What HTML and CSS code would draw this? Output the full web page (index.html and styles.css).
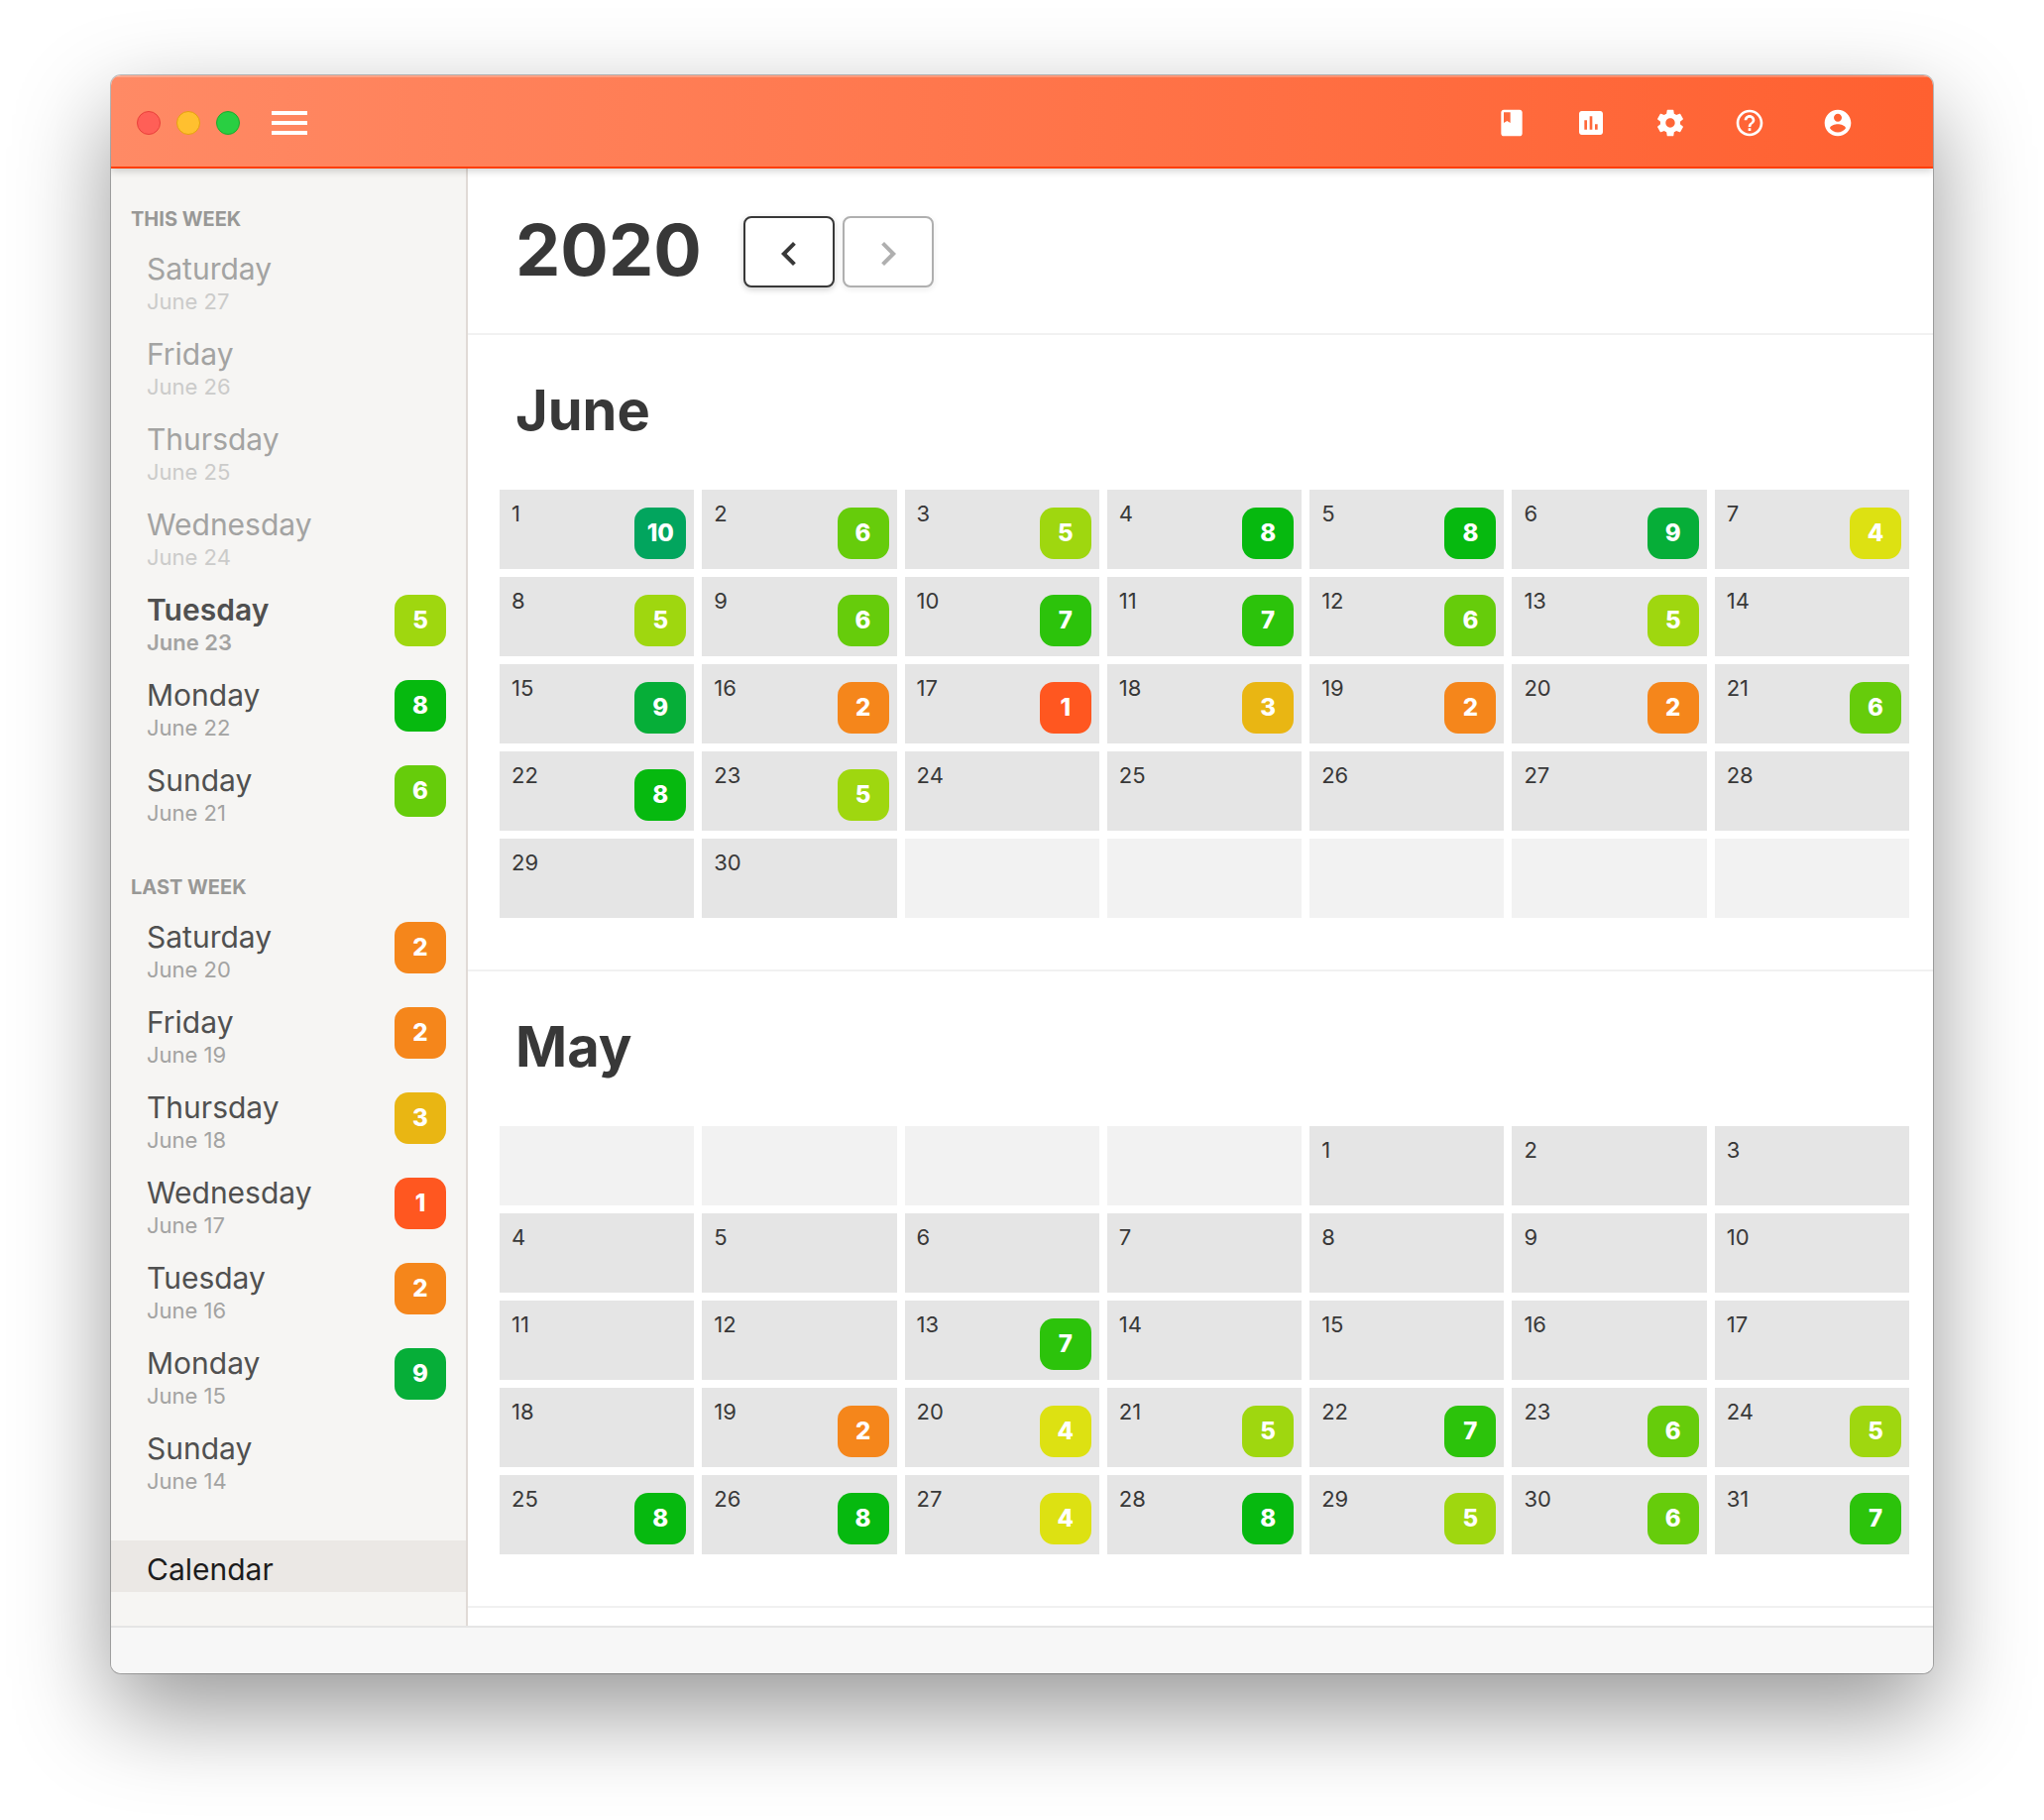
FILE: index.html
```html
<!DOCTYPE html>
<html lang="en">
<head>
<meta charset="utf-8">
<meta name="viewport" content="width=device-width, initial-scale=1">
<title>Calendar 2020</title>
<link rel="stylesheet" href="styles.css">
</head>
<body>
<div class="window">
  <header class="titlebar">
    <div class="lights" aria-hidden="true">
      <span class="light light-close"></span>
      <span class="light light-minimize"></span>
      <span class="light light-zoom"></span>
    </div>
    <button class="menu" type="button" aria-label="Toggle sidebar"><span></span><span></span><span></span></button>
    <nav class="tools" aria-label="Tools">
      <a href="#journal" aria-label="Journal"><svg viewBox="0 0 24 24"><path d="M18 2H6c-1.100 0-2 .9-2 2v16c0 1.100.9 2 2 2h12c1.100 0 2-.9 2-2V4c0-1.100-.9-2-2-2zM6 4h5v8l-2.500-1.500L6 12V4z"/></svg></a>
      <a href="#stats" aria-label="Statistics"><svg viewBox="0 0 24 24"><path d="M19 3H5c-1.100 0-2 .9-2 2v14c0 1.100.9 2 2 2h14c1.100 0 2-.9 2-2V5c0-1.100-.9-2-2-2zM9 17H7v-7h2v7zm4 0h-2V7h2v10zm4 0h-2v-4h2v4z"/></svg></a>
      <a href="#settings" aria-label="Settings"><svg viewBox="0 0 24 24"><path d="M19.430 12.980c.04-.32.07-.64.07-.98s-.03-.66-.07-.98l2.110-1.650c.19-.15.24-.42.12-.64l-2-3.460c-.12-.22-.39-.3-.61-.22l-2.490 1c-.52-.4-1.080-.73-1.690-.98l-.38-2.650C14.460 2.180 14.250 2 14 2h-4c-.25 0-.46.18-.49.42l-.38 2.650c-.61.25-1.170.59-1.690.98l-2.490-1c-.23-.09-.49 0-.61.22l-2 3.460c-.13.22-.07.49.12.64l2.110 1.650c-.04.32-.07.65-.07.98s.03.66.07.98l-2.110 1.650c-.19.15-.24.42-.12.64l2 3.460c.12.22.39.3.61.22l2.490-1c.52.4 1.080.73 1.690.98l.38 2.650c.03.24.24.42.49.42h4c.25 0 .46-.18.49-.42l.38-2.650c.61-.25 1.170-.59 1.690-.98l2.490 1c.23.09.49 0 .61-.22l2-3.460c.12-.22.07-.49-.12-.64l-2.110-1.650zM12 15.500c-1.930 0-3.500-1.570-3.500-3.500s1.570-3.500 3.500-3.500 3.500 1.570 3.500 3.500-1.570 3.500-3.500 3.500z"/></svg></a>
      <a href="#help" aria-label="Help"><svg viewBox="0 0 24 24"><path d="M11 18h2v-2h-2v2zm1-16C6.480 2 2 6.480 2 12s4.480 10 10 10 10-4.480 10-10S17.520 2 12 2zm0 18c-4.410 0-8-3.590-8-8s3.590-8 8-8 8 3.590 8 8-3.590 8-8 8zm0-14c-2.210 0-4 1.790-4 4h2c0-1.100.9-2 2-2s2 .9 2 2c0 2-3 1.750-3 5h2c0-2.250 3-2.500 3-5 0-2.210-1.790-4-4-4z"/></svg></a>
      <a class="account" href="#account" aria-label="Account"><svg viewBox="0 0 24 24"><path d="M12 2C6.480 2 2 6.480 2 12s4.480 10 10 10 10-4.480 10-10S17.520 2 12 2zm0 3c1.660 0 3 1.340 3 3s-1.340 3-3 3-3-1.340-3-3 1.340-3 3-3zm0 14.200c-2.500 0-4.710-1.280-6-3.220.03-1.990 4-3.080 6-3.080 1.990 0 5.970 1.090 6 3.080-1.290 1.940-3.500 3.220-6 3.220z"/></svg></a>
    </nav>
  </header>

  <div class="body">
    <nav class="sidebar" aria-label="Days">
      <section class="week">
        <h2>THIS WEEK</h2>
        <a class="day future" href="#d0627"><span class="label">Saturday<small>June 27</small></span></a>
        <a class="day future" href="#d0626"><span class="label">Friday<small>June 26</small></span></a>
        <a class="day future" href="#d0625"><span class="label">Thursday<small>June 25</small></span></a>
        <a class="day future" href="#d0624"><span class="label">Wednesday<small>June 24</small></span></a>
        <a class="day today" href="#d0623"><span class="label">Tuesday<small>June 23</small></span><b class="score s5">5</b></a>
        <a class="day" href="#d0622"><span class="label">Monday<small>June 22</small></span><b class="score s8">8</b></a>
        <a class="day" href="#d0621"><span class="label">Sunday<small>June 21</small></span><b class="score s6">6</b></a>
      </section>
      <section class="week">
        <h2>LAST WEEK</h2>
        <a class="day" href="#d0620"><span class="label">Saturday<small>June 20</small></span><b class="score s2">2</b></a>
        <a class="day" href="#d0619"><span class="label">Friday<small>June 19</small></span><b class="score s2">2</b></a>
        <a class="day" href="#d0618"><span class="label">Thursday<small>June 18</small></span><b class="score s3">3</b></a>
        <a class="day" href="#d0617"><span class="label">Wednesday<small>June 17</small></span><b class="score s1">1</b></a>
        <a class="day" href="#d0616"><span class="label">Tuesday<small>June 16</small></span><b class="score s2">2</b></a>
        <a class="day" href="#d0615"><span class="label">Monday<small>June 15</small></span><b class="score s9">9</b></a>
        <a class="day" href="#d0614"><span class="label">Sunday<small>June 14</small></span></a>
      </section>
      <a class="page-link" href="#calendar" aria-current="page">Calendar</a>
    </nav>

    <main class="content" id="calendar">
      <div class="year">
        <h1>2020</h1>
        <div class="pager">
          <button type="button" aria-label="Previous year"><svg viewBox="0 0 24 24"><path d="M15.410 7.410L14 6l-6 6 6 6 1.410-1.410L10.830 12z"/></svg></button>
          <button type="button" aria-label="Next year" disabled><svg viewBox="0 0 24 24"><path d="M10 6L8.590 7.410 13.170 12l-4.580 4.590L10 18l6-6z"/></svg></button>
        </div>
      </div>

      <section class="month">
        <h2>June</h2>
        <ol class="grid">
          <li>1<b class="score s10">10</b></li>
          <li>2<b class="score s6">6</b></li>
          <li>3<b class="score s5">5</b></li>
          <li>4<b class="score s8">8</b></li>
          <li>5<b class="score s8">8</b></li>
          <li>6<b class="score s9">9</b></li>
          <li>7<b class="score s4">4</b></li>
          <li>8<b class="score s5">5</b></li>
          <li>9<b class="score s6">6</b></li>
          <li>10<b class="score s7">7</b></li>
          <li>11<b class="score s7">7</b></li>
          <li>12<b class="score s6">6</b></li>
          <li>13<b class="score s5">5</b></li>
          <li>14</li>
          <li>15<b class="score s9">9</b></li>
          <li>16<b class="score s2">2</b></li>
          <li>17<b class="score s1">1</b></li>
          <li>18<b class="score s3">3</b></li>
          <li>19<b class="score s2">2</b></li>
          <li>20<b class="score s2">2</b></li>
          <li>21<b class="score s6">6</b></li>
          <li>22<b class="score s8">8</b></li>
          <li>23<b class="score s5">5</b></li>
          <li>24</li>
          <li>25</li>
          <li>26</li>
          <li>27</li>
          <li>28</li>
          <li>29</li>
          <li>30</li>
          <li class="blank"></li>
          <li class="blank"></li>
          <li class="blank"></li>
          <li class="blank"></li>
          <li class="blank"></li>
        </ol>
      </section>

      <section class="month">
        <h2>May</h2>
        <ol class="grid">
          <li class="blank"></li>
          <li class="blank"></li>
          <li class="blank"></li>
          <li class="blank"></li>
          <li>1</li>
          <li>2</li>
          <li>3</li>
          <li>4</li>
          <li>5</li>
          <li>6</li>
          <li>7</li>
          <li>8</li>
          <li>9</li>
          <li>10</li>
          <li>11</li>
          <li>12</li>
          <li>13<b class="score s7">7</b></li>
          <li>14</li>
          <li>15</li>
          <li>16</li>
          <li>17</li>
          <li>18</li>
          <li>19<b class="score s2">2</b></li>
          <li>20<b class="score s4">4</b></li>
          <li>21<b class="score s5">5</b></li>
          <li>22<b class="score s7">7</b></li>
          <li>23<b class="score s6">6</b></li>
          <li>24<b class="score s5">5</b></li>
          <li>25<b class="score s8">8</b></li>
          <li>26<b class="score s8">8</b></li>
          <li>27<b class="score s4">4</b></li>
          <li>28<b class="score s8">8</b></li>
          <li>29<b class="score s5">5</b></li>
          <li>30<b class="score s6">6</b></li>
          <li>31<b class="score s7">7</b></li>
        </ol>
      </section>
    </main>
  </div>

  <footer class="statusbar"></footer>
</div>
</body>
</html>
```
FILE: styles.css
```css
* {
  box-sizing: border-box;
}

body {
  margin: 0;
  padding: 76px 112px 148px;
  background: #fff;
  color: #383838;
  font-family: Inter, "Liberation Sans", sans-serif;
  font-size: 22px;
  line-height: 28px;
}

h1,
h2,
ol {
  margin: 0;
  padding: 0;
}

a {
  color: inherit;
  text-decoration: none;
}

svg {
  display: block;
  fill: currentColor;
}

.window {
  display: flex;
  flex-direction: column;
  overflow: hidden;
  border-radius: 10px;
  background: #fff;
  box-shadow: 0 0 0 1px rgba(0, 0, 0, 0.24), 0 38px 96px rgba(0, 0, 0, 0.41);
}

/* Title bar */
.titlebar {
  position: relative;
  z-index: 1;
  display: flex;
  align-items: center;
  height: 94px;
  padding: 4px 80px 0 26px;
  border-bottom: 2px solid #ff3d00;
  background: linear-gradient(90deg, #ff8a65, #ff6030);
  box-shadow: inset 0 2px 0 rgba(255, 255, 255, 0.25), 0 2px 8px rgba(0, 0, 0, 0.2);
  color: #fff;
}

.lights {
  display: flex;
  gap: 16px;
}

.light {
  width: 24px;
  height: 24px;
  border: 1px solid #e9403a;
  border-radius: 50%;
  background: #ff5f57;
}

.light-minimize {
  border-color: #e5a010;
  background: #ffc02f;
}

.light-zoom {
  border-color: #1cab2c;
  background: #29cf42;
}

.menu {
  display: flex;
  flex-direction: column;
  gap: 6px;
  width: 36px;
  margin-left: 32px;
  padding: 0;
  border: 0;
  background: none;
}

.menu span {
  height: 4px;
  background: #fff;
}

.tools {
  display: flex;
  gap: 48px;
  margin-left: auto;
}

.tools svg {
  width: 32px;
  height: 32px;
}

.account {
  margin-left: 9px;
}

/* Layout */
.body {
  display: flex;
}

.content {
  flex: 1;
  min-width: 0;
}

/* Sidebar */
.sidebar {
  flex: 0 0 360px;
  padding: 39px 0 34px;
  border-right: 2px solid #e0dad6;
  background: #f6f5f3;
  color: #505050;
}

.week + .week {
  margin-top: 38px;
}

.week h2 {
  margin-bottom: 10px;
  padding-left: 20px;
  color: #989896;
  font-size: 20px;
  font-weight: 700;
  line-height: 24px;
}

.day {
  display: flex;
  align-items: flex-start;
  justify-content: space-between;
  padding: 10px 20px 10px 36px;
}

.label {
  font-size: 30px;
  line-height: 36px;
}

.label small {
  display: block;
  color: #a3a3a2;
  font-size: 22px;
  line-height: 30px;
}

.future {
  color: #a3a3a2;
}

.future small {
  color: #cbcbca;
}

.today {
  font-weight: 600;
}

.page-link {
  display: block;
  margin-top: 35px;
  padding: 11px 36px 5px;
  background: #ebe8e5;
  color: #1c1c1c;
  font-size: 30px;
  line-height: 36px;
}

/* Scores */
.score {
  display: block;
  flex: none;
  width: 52px;
  height: 52px;
  border-radius: 14px;
  color: #fff;
  font-size: 24px;
  font-weight: 800;
  line-height: 52px;
  text-align: center;
}

.day .score {
  margin-top: 3px;
}

.s10 { background: #02a55e; }
.s9 { background: #06ae38; }
.s8 { background: #06b90f; }
.s7 { background: #2cc30b; }
.s6 { background: #66cc0b; }
.s5 { background: #9fd70f; }
.s4 { background: #dde112; }
.s3 { background: #e9b613; }
.s2 { background: #f5861b; }
.s1 { background: #ff5720; }

/* Year header */
.year {
  display: flex;
  align-items: flex-start;
  gap: 42px;
  padding: 48px 48px 46px;
  border-bottom: 2px solid #f1f1f1;
}

.year h1 {
  font-size: 72px;
  font-weight: 700;
  line-height: 68px;
}

.pager {
  display: flex;
  gap: 8px;
}

.pager button {
  display: flex;
  align-items: center;
  justify-content: center;
  width: 92px;
  height: 72px;
  padding: 4px 0 0;
  border: 2px solid #383838;
  border-radius: 8px;
  background: #fff;
  box-shadow: 0 2px 6px rgba(0, 0, 0, 0.2);
  color: #383838;
}

.pager button:disabled {
  border-color: #afafaf;
  box-shadow: 0 2px 6px rgba(0, 0, 0, 0.08);
  color: #afafaf;
}

.pager svg {
  width: 48px;
  height: 48px;
}

/* Months */
.month {
  padding: 40px 24px 52px 32px;
  border-bottom: 2px solid #f1f1f1;
}

.month h2 {
  padding: 0 16px 44px;
  font-size: 56px;
  font-weight: 700;
  line-height: 72px;
}

.grid {
  display: grid;
  grid-template-columns: repeat(7, 1fr);
  gap: 8px;
  list-style: none;
}

.grid li {
  display: flex;
  justify-content: space-between;
  height: 80px;
  padding: 10px 8px 10px 12px;
  background: #e5e5e5;
}

.grid .blank {
  background: #f2f2f2;
}

.grid .score {
  align-self: flex-end;
}

/* Status bar */
.statusbar {
  height: 48px;
  border-top: 2px solid #e5e5e5;
  background: #f7f7f7;
}
```
